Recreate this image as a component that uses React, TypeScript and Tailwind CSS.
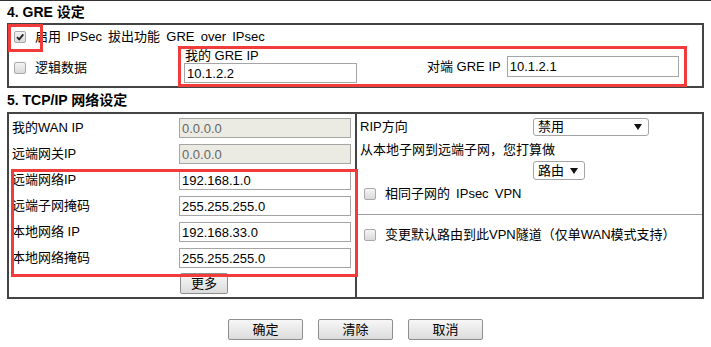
import React from "react";

function Check({ checked = false }: { checked?: boolean }) {
	return (
		<span className="relative inline-flex h-[12px] w-[12px] shrink-0 items-center justify-center rounded-[2px] border border-[#a9a9a9] bg-gradient-to-b from-[#f4f4f4] to-[#dadada]">
			{checked && (
				<svg width="10" height="10" viewBox="0 0 10 10" className="absolute">
					<path d="M2 5.2 L4.2 7.4 L8.3 2.4" fill="none" stroke="#222" strokeWidth="1.8" />
				</svg>
			)}
		</span>
	);
}

function Field({
	value,
	disabled = false,
	className = "",
}: {
	value: string;
	disabled?: boolean;
	className?: string;
}) {
	return (
		<input
			readOnly
			defaultValue={value}
			className={`h-[20px] border border-[#a5a5a5] px-[2px] text-[13px] outline-none font-['Liberation_Sans','Noto_Sans_CJK_SC',sans-serif] ${
				disabled ? "bg-[#ebebe4] text-[#666]" : "bg-white text-black"
			} ${className}`}
		/>
	);
}

function Select({ label, className = "" }: { label: string; className?: string }) {
	return (
		<div
			className={`flex items-center justify-between rounded-[3px] border border-[#a5a5a5] bg-white pl-[4px] pr-[6px] ${className}`}
		>
			<span>{label}</span>
			<svg width="8" height="6" viewBox="0 0 8 6">
				<path d="M0 0 H8 L4 6 Z" fill="#111" />
			</svg>
		</div>
	);
}

function Btn({ label, className = "" }: { label: string; className?: string }) {
	return (
		<button
			type="button"
			className={`h-[21px] rounded-[2px] border border-[#8e8e8e] bg-gradient-to-b from-[#f7f7f7] to-[#dcdcdc] text-[13px] leading-none ${className}`}
		>
			{label}
		</button>
	);
}

const rows: { label: string; value: string; disabled?: boolean }[] = [
	{ label: "我的WAN IP", value: "0.0.0.0", disabled: true },
	{ label: "远端网关IP", value: "0.0.0.0", disabled: true },
	{ label: "远端网络IP", value: "192.168.1.0" },
	{ label: "远端子网掩码", value: "255.255.255.0" },
	{ label: "本地网络 IP", value: "192.168.33.0" },
	{ label: "本地网络掩码", value: "255.255.255.0" },
];

export default function App() {
	return (
		<div className="relative h-[347px] w-[711px] overflow-hidden border-t border-[#333] bg-white text-[13px] text-black font-['Liberation_Sans','Noto_Sans_CJK_SC',sans-serif]">
			<div className="flex h-[22px] items-center pl-[7px] text-[14px] font-bold">4. GRE 设定</div>

			<div className="mx-[7px] h-[65px] border-2 border-[#444]">
				<div className="flex h-[24px] items-center pl-[5px]">
					<Check checked />
					<span className="ml-[9px] [word-spacing:2.6px]">启用 IPSec 拔出功能 GRE over IPsec</span>
				</div>
				<div className="flex h-[37px]">
					<div className="flex w-[175px] items-center pl-[5px]">
						<Check />
						<span className="ml-[9px]">逻辑数据</span>
					</div>
					<div className="flex w-[173px] flex-col">
						<div className="flex h-[14px] items-center pl-[1px]">我的 GRE IP</div>
						<Field value="10.1.2.2" className="w-[173px]" />
					</div>
					<div className="mt-[7px] flex h-[21px] items-center">
						<span className="ml-[70px]">对端 GRE IP</span>
						<Field value="10.1.2.1" className="ml-[6px] h-[21px] w-[172px]" />
					</div>
				</div>
			</div>

			<div className="flex h-[24px] items-center pl-[7px] text-[14px] font-bold">5. TCP/IP 网络设定</div>

			<div className="mx-[7px] flex h-[187px] border-2 border-[#444]">
				<div className="w-[348px] border-r-2 border-[#444] pt-[4px]">
					<div className="flex flex-col gap-[6px]">
						{rows.map((r) => (
							<div key={r.label} className="flex h-[20px] items-center">
								<span className="w-[170px] pl-[3px]">{r.label}</span>
								<Field value={r.value} disabled={r.disabled} className="w-[172px]" />
							</div>
						))}
					</div>
					<Btn label="更多" className="ml-[171px] mt-[5px] w-[48px]" />
				</div>

				<div className="flex flex-1 flex-col pt-[4px]">
					<div className="flex h-[18px] items-center pl-[3px]">
						<span className="w-[173px]">RIP方向</span>
						<Select label="禁用" className="h-[18px] w-[116px]" />
					</div>
					<div className="mt-[5px] flex h-[18px] items-center pl-[3px]">从本地子网到远端子网，您打算做</div>
					<div className="mt-[2px] flex h-[19px] pl-[176px]">
						<Select label="路由" className="h-[19px] w-[52px]" />
					</div>
					<div className="mt-[4px] flex h-[20px] items-center pl-[7px]">
						<Check />
						<span className="ml-[9px] [word-spacing:2.5px]">相同子网的 IPsec VPN</span>
					</div>
					<div className="mt-[10px] border-b border-[#a0a0a0]" />
					<div className="mt-[10px] flex h-[20px] items-center pl-[7px]">
						<Check />
						<span className="ml-[9px]">变更默认路由到此VPN隧道（仅单WAN模式支持）</span>
					</div>
				</div>
			</div>

			<div className="mt-[20px] flex justify-center gap-[15px]">
				<Btn label="确定" className="w-[75px]" />
				<Btn label="清除" className="w-[75px]" />
				<Btn label="取消" className="w-[75px]" />
			</div>

			{/* red annotation boxes */}
			<div className="pointer-events-none absolute left-[8px] top-[23px] h-[28px] w-[35px] border-[3px] border-[#f23b3b]" />
			<div className="pointer-events-none absolute left-[178px] top-[45px] h-[41px] w-[509px] border-[3px] border-[#f23b3b]" />
			<div className="pointer-events-none absolute left-[11px] top-[168px] h-[108px] w-[347px] border-[3px] border-[#f23b3b]" />
		</div>
	);
}
